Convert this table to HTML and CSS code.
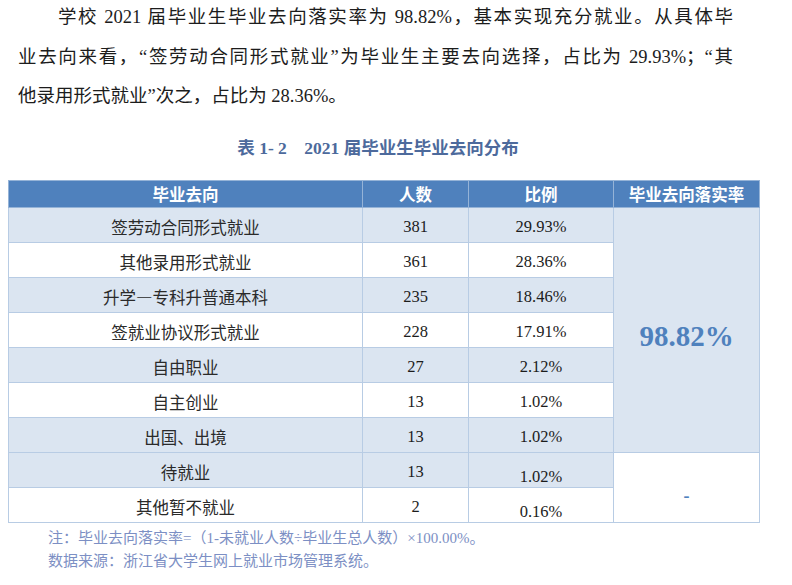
FILE: index.html
```html
<!DOCTYPE html>
<html lang="zh-CN">
<head>
<meta charset="utf-8">
<link rel="stylesheet" href="styles.css">
</head>
<body>
<div class="page">
  <div class="intro">
    <span class="line first just">学校 2021 届毕业生毕业去向落实率为 98.82%，基本实现充分就业。从具体毕</span>
    <span class="line just">业去向来看，“签劳动合同形式就业”为毕业生主要去向选择，占比为 29.93%；“其</span>
    <span class="line">他录用形式就业”次之，占比为 28.36%。</span>
  </div>
  <div class="caption">表 1- 2&nbsp;&nbsp;&nbsp;&nbsp;2021 届毕业生毕业去向分布</div>
  <table class="dist">
    <colgroup>
      <col class="c1"><col class="c2"><col class="c3"><col class="c4">
    </colgroup>
    <thead>
      <tr><th>毕业去向</th><th>人数</th><th>比例</th><th>毕业去向落实率</th></tr>
    </thead>
    <tbody>
      <tr class="blue"><td class="name">签劳动合同形式就业</td><td class="num">381</td><td class="num">29.93%</td><td class="rate" rowspan="7">98.82%</td></tr>
      <tr><td class="name">其他录用形式就业</td><td class="num">361</td><td class="num">28.36%</td></tr>
      <tr class="blue"><td class="name">升学—专科升普通本科</td><td class="num">235</td><td class="num">18.46%</td></tr>
      <tr><td class="name">签就业协议形式就业</td><td class="num">228</td><td class="num">17.91%</td></tr>
      <tr class="blue"><td class="name">自由职业</td><td class="num">27</td><td class="num">2.12%</td></tr>
      <tr><td class="name">自主创业</td><td class="num">13</td><td class="num">1.02%</td></tr>
      <tr class="blue"><td class="name">出国、出境</td><td class="num">13</td><td class="num">1.02%</td></tr>
      <tr class="blue"><td class="name">待就业</td><td class="num">13</td><td class="num low">1.02%</td><td class="dash" rowspan="2">-</td></tr>
      <tr><td class="name">其他暂不就业</td><td class="num">2</td><td class="num low">0.16%</td></tr>
    </tbody>
  </table>
  <div class="notes">
    <p>注：毕业去向落实率=（1-未就业人数÷毕业生总人数）×100.00%。</p>
    <p>数据来源：浙江省大学生网上就业市场管理系统。</p>
  </div>
</div>
</body>
</html>
```

FILE: styles.css
```css
html, body {
  margin: 0;
  padding: 0;
  background: #ffffff;
}

.page {
  width: 792px;
  height: 585px;
  overflow: hidden;
  font-family: "Liberation Serif", "Noto Sans CJK SC", serif;
}

.intro {
  margin: -2px 0 0 18px;
  width: 715px;
  font-size: 18.5px;
  line-height: 39.5px;
  color: #1c1c1c;
}

.intro .line {
  display: block;
  white-space: nowrap;
}

.intro .just {
  text-align: justify;
  text-align-last: justify;
}

.intro .first {
  padding-left: 40px;
}

.caption {
  margin: 20px 0 0 0;
  width: 756px;
  text-align: center;
  font-size: 17.5px;
  font-weight: bold;
  line-height: 22px;
  color: #4d6a9c;
}

.dist {
  margin: 21px 0 0 8px;
  border-collapse: collapse;
  table-layout: fixed;
  width: 751px;
  font-family: "Liberation Serif", "Noto Sans CJK SC", serif;
}

.dist col.c1 { width: 354px; }
.dist col.c2 { width: 106px; }
.dist col.c3 { width: 145px; }
.dist col.c4 { width: 146px; }

.dist th {
  height: 27px;
  padding: 0;
  box-sizing: border-box;
  background: #4f81bd;
  color: #ffffff;
  font-family: "Noto Sans CJK SC", sans-serif;
  font-weight: bold;
  font-size: 16.5px;
  line-height: 20px;
  border: 1px solid #95b3d7;
}

.dist td {
  height: 35px;
  padding: 4px 0 0 0;
  box-sizing: border-box;
  text-align: center;
  border: 1px solid #b8cce4;
  background: #ffffff;
  color: #1c1c1c;
}

.dist tr.blue td {
  background: #dbe5f1;
}

.dist td.name {
  font-family: "Noto Sans CJK SC", sans-serif;
  font-size: 16.5px;
  color: #2a2a2a;
}

.dist td.num {
  font-size: 16.5px;
}

.dist td.low {
  padding-top: 14px;
}

.dist td.rate {
  background: #dbe5f1;
  color: #4f81bd;
  font-family: "Liberation Serif", "Times New Roman", serif;
  font-weight: 700;
  font-size: 29px;
  padding-top: 14px;
}

.dist tr.blue td.dash {
  background: #ffffff;
  color: #4f81bd;
  font-family: "Liberation Serif", serif;
  font-weight: bold;
  font-size: 18px;
  padding-top: 18px;
}

.notes {
  margin: 4px 0 0 48px;
  font-size: 15px;
  line-height: 23px;
  color: #7c8fc4;
}

.notes p {
  margin: 0;
}
```
